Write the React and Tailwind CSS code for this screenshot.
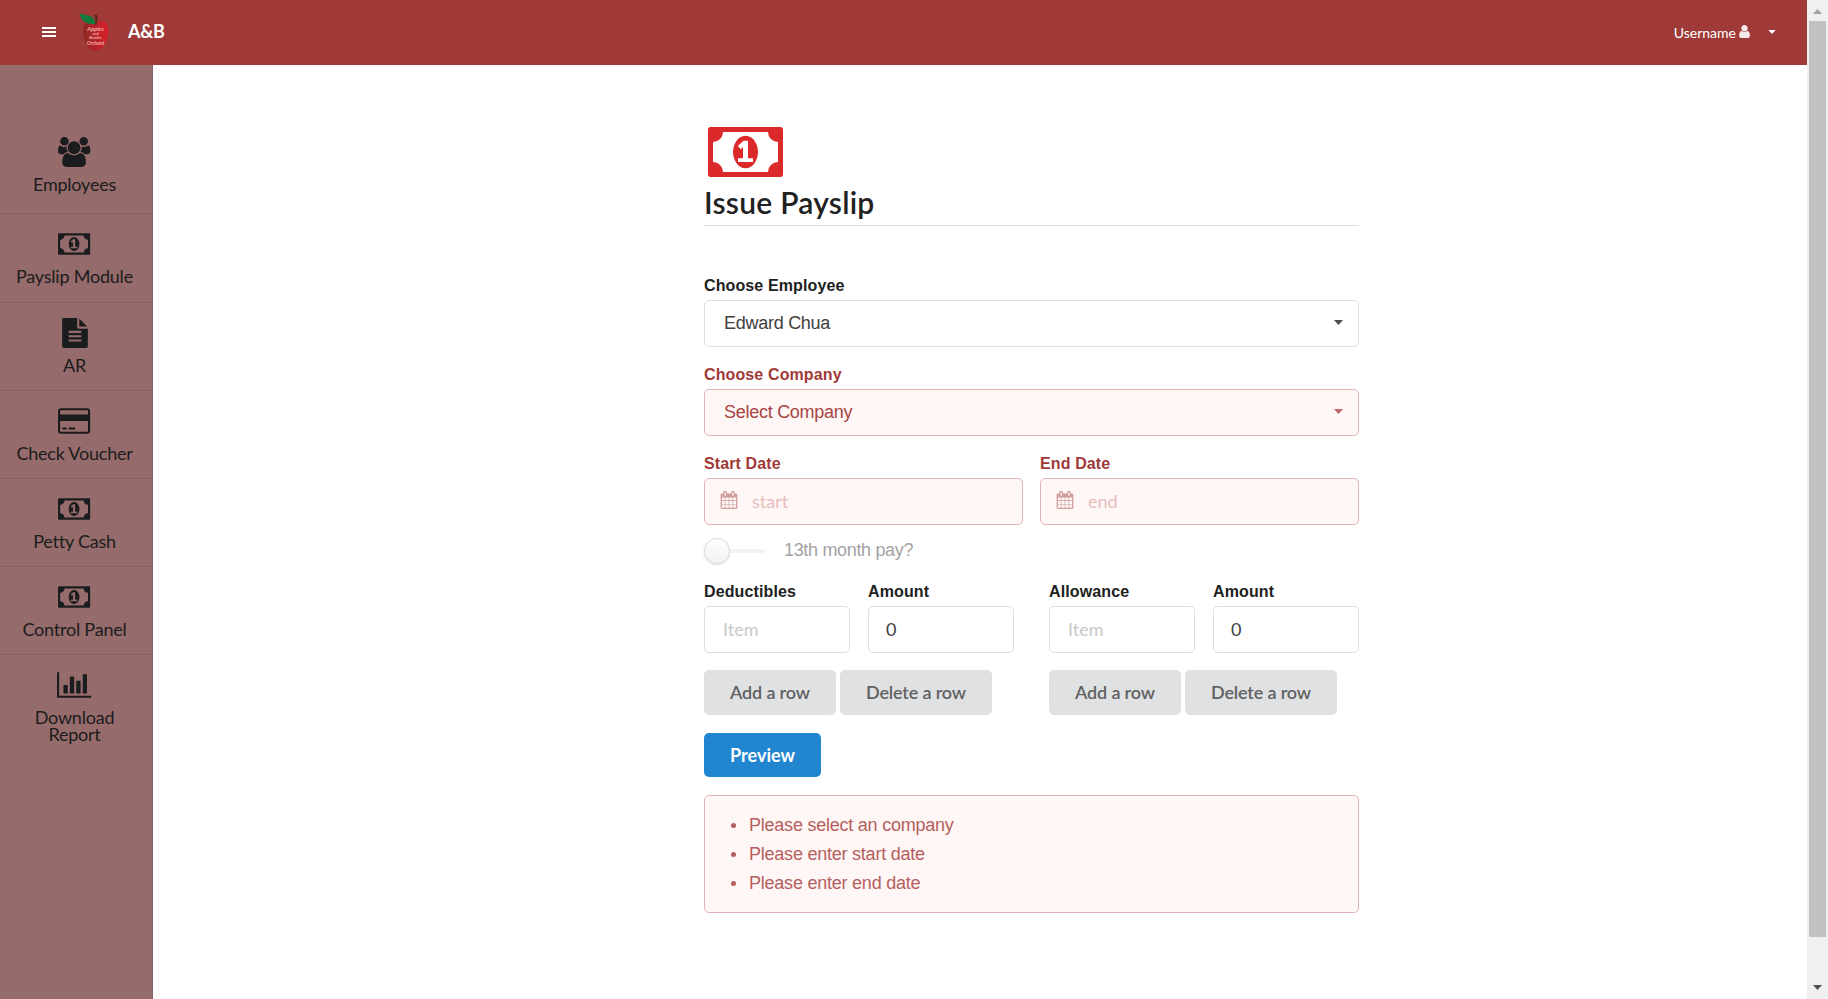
const PATHS = {
  users: "M593 896q-162 5-265 128h-134q-82 0-138-40.5t-56-118.5q0-353 124-353 6 0 43.5 21t97.5 42.5 119 21.5q67 0 133-23-5 37-5 66 0 159 93 256zm1071 637q0 120-73 189.5t-194 69.5h-874q-121 0-194-69.5t-73-189.5q0-53 3.5-103.5t14-109 26.5-108.5 43-97.5 62-81 85.5-53.5 111.5-20q10 0 43 21.5t73 48 107 48 135 21.5 135-21.5 107-48 73-48 43-21.5q61 0 111.5 20t85.5 53.5 62 81 43 97.5 26.5 108.5 14 109 3.5 103.5zm-1024-1277q0 106-75 181t-181 75-181-75-75-181 75-181 181-75 181 75 75 181zm704 384q0 159-112.5 271.5t-271.5 112.5-271.5-112.5-112.5-271.5 112.5-271.5 271.5-112.5 271.5 112.5 112.5 271.5zm576 225q0 78-56 118.5t-138 40.5h-134q-103-123-265-128 93-97 93-256 0-29-5-66 66 23 133 23 59 0 119-21.5t97.5-42.5 43.5-21q124 0 124 353zm-128-609q0 106-75 181t-181 75-181-75-75-181 75-181 181-75 181 75 75 181z",
  money: "M768 1152h384v-96h-128v-448h-114l-148 137 77 80q42-37 55-57h2v288h-128v96zm512-256q0 70-21 142t-59.5 134-101.5 101-138 39-138-39-101.5-101-59.5-134-21-142 21-142 59.5-134 101.5-101 138-39 138 39 101.5 101 59.5 134 21 142zm512 256v-512q-106 0-181-75t-75-181h-1152q0 106-75 181t-181 75v512q106 0 181 75t75 181h1152q0-106 75-181t181-75zm128-832v1152q0 26-19 45t-45 19h-1792q-26 0-45-19t-19-45v-1152q0-26 19-45t45-19h1792q26 0 45 19t19 45z",
  file: "M1596 476q14 14 28 36h-472v-472q22 14 36 28zm-476 164h544v1056q0 40-28 68t-68 28h-1344q-40 0-68-28t-28-68v-1600q0-40 28-68t68-28h800v544q0 40 28 68t68 28zm160 736v-64q0-14-9-23t-23-9h-704q-14 0-23 9t-9 23v64q0 14 9 23t23 9h704q14 0 23-9t9-23zm0-256v-64q0-14-9-23t-23-9h-704q-14 0-23 9t-9 23v64q0 14 9 23t23 9h704q14 0 23-9t9-23zm0-256v-64q0-14-9-23t-23-9h-704q-14 0-23 9t-9 23v64q0 14 9 23t23 9h704q14 0 23-9t9-23z",
  card: "M1760 128q66 0 113 47t47 113v1216q0 66-47 113t-113 47h-1600q-66 0-113-47t-47-113v-1216q0-66 47-113t113-47h1600zm-1600 128q-13 0-22.5 9.5t-9.5 22.5v224h1664v-224q0-13-9.5-22.5t-22.5-9.5h-1600zm1600 1280q13 0 22.5-9.5t9.5-22.5v-608h-1664v608q0 13 9.5 22.5t22.5 9.5h1600zm-1504-128v-128h256v128h-256zm384 0v-128h384v128h-384z",
  chart: "M640 896v512h-256v-512h256zm384-512v1024h-256v-1024h256zm1024 1152v128h-2048v-1536h128v1408h1920zm-640-896v768h-256v-768h256zm384-384v1152h-256v-1152h256z",
  calendar: "M192 1664h288v-288h-288v288zm352 0h320v-288h-320v288zm-352-352h288v-320h-288v320zm352 0h320v-320h-320v320zm-352-384h288v-288h-288v288zm736 736h320v-288h-320v288zm-384-736h320v-288h-320v288zm768 736h288v-288h-288v288zm-384-352h320v-320h-320v320zm-352-864v-288q0-13-9.5-22.5t-22.5-9.5h-64q-13 0-22.5 9.5t-9.5 22.5v288q0 13 9.5 22.5t22.5 9.5h64q13 0 22.5-9.5t9.5-22.5zm736 864h288v-320h-288v320zm-384-384h320v-288h-320v288zm384 0h288v-288h-288v288zm32-480v-288q0-13-9.5-22.5t-22.5-9.5h-64q-13 0-22.5 9.5t-9.5 22.5v288q0 13 9.5 22.5t22.5 9.5h64q13 0 22.5-9.5t9.5-22.5zm384-64v1280q0 52-38 90t-90 38h-1408q-52 0-90-38t-38-90v-1280q0-52 38-90t90-38h128v-96q0-66 47-113t113-47h64q66 0 113 47t47 113v96h384v-96q0-66 47-113t113-47h64q66 0 113 47t47 113v96h128q52 0 90 38t38 90z",
  user: "M1536 1399q0 109-62.5 187t-150.5 78h-854q-88 0-150.5-78t-62.5-187q0-85 8.5-160.5t31.5-152 58.5-131 94-89 134.5-34.5q131 128 313 128t313-128q76 0 134.5 34.5t94 89 58.5 131 31.5 152 8.5 160.5zm-256-887q0 159-112.5 271.5t-271.5 112.5-271.5-112.5-112.5-271.5 112.5-271.5 271.5-112.5 271.5 112.5 112.5 271.5z",
};
const WIDTHS = { users: 1920, money: 1920, card: 1920, chart: 2048 };

function Icon({ name, className }) {
  return (
    <svg viewBox={`0 0 ${WIDTHS[name] || 1792} 1792`} className={className} fill="currentColor">
      <path d={PATHS[name]} />
    </svg>
  );
}

function Caret({ className }) {
  return (
    <svg viewBox="0 0 9 5" className={className} fill="currentColor">
      <path d="M0 0h9L4.5 5z" />
    </svg>
  );
}

function Logo() {
  return (
    <svg viewBox="0 0 32 40" className="ml-[23px] mt-[-1px] h-[40px] w-[32px]">
      <defs>
        <linearGradient id="apple" x1="0" x2="1" y1="0" y2="0">
          <stop offset="0" stopColor="#8c2a20" />
          <stop offset="0.5" stopColor="#b8222a" />
          <stop offset="1" stopColor="#d81f2a" />
        </linearGradient>
      </defs>
      <path d="M17 11.500C14 8.500 7 9 5 13C3 19 5 32 10 36C12 38.500 15 39 17 38.500C20 39 23 37 25 34C29 27 30.500 18 28 12C26 8 19 8 17 11.500Z" fill="url(#apple)" />
      <path d="M15.500 13C17 9 17 5 14.500 3L18 2.500C19 6 18.500 10 17 13Z" fill="#5a2a17" />
      <path d="M0.500 0.500C3 4 12 2 15 7C16 9 16 11 16 12C9 12.500 1.500 10 0.500 0.500Z" fill="#0f7a3c" />
      <g fill="#f3a9a4" fontFamily="Lato, sans-serif" fontWeight="700" textAnchor="middle">
        <text x="16.500" y="18.500" fontSize="5.800" fontStyle="italic">Apples</text>
        <text x="16.500" y="23" fontSize="4">and</text>
        <text x="16.500" y="27" fontSize="4">Bottles</text>
        <text x="16.500" y="32.500" fontSize="5" fontStyle="italic">Orchard</text>
      </g>
    </svg>
  );
}

const MENU = [
  ["users", "Employees", "h-[93px] pt-[16px]"],
  ["money", "Payslip Module", "h-[89px] pt-[15px]"],
  ["file", "AR", "h-[88px] pt-[15px]"],
  ["card", "Check Voucher", "h-[88px] pt-[15px]"],
  ["money", "Petty Cash", "h-[88px] pt-[15px]"],
  ["money", "Control Panel", "h-[88px] pt-[15px]"],
  ["chart", "Download Report", "h-[110px] pt-[15px] border-b-0"],
];

function Label({ children, error }) {
  return (
    <div className={`h-[21px] whitespace-nowrap pt-[1px] font-['Liberation_Sans',sans-serif] text-[16px] leading-[20px] tracking-[0.12px] font-bold ${error ? "text-[#9f3a38]" : "text-[#212121]"}`}>
      {children}
    </div>
  );
}

function Select({ label, value, error }) {
  return (
    <div className="mb-[17px]">
      <Label error={error}>{label}</Label>
      <div className={`mt-[4px] flex h-[47px] items-center justify-between rounded-[5px] border pr-[15px] pl-[19px] font-['Liberation_Sans',sans-serif] text-[18px] tracking-[-0.27px] ${error ? "border-[#e0b4b4] bg-[#fff6f6] text-[#a64543]" : "border-[#dededf] text-[#404040]"}`}>
        <span>{value}</span>
        <Caret className={`mt-[-3px] h-[5px] w-[9px] ${error ? "text-[#b96a69]" : "text-[#4d4d4d]"}`} />
      </div>
    </div>
  );
}

function DateField({ label, placeholder }) {
  return (
    <div>
      <Label error>{label}</Label>
      <div className="mt-[4px] flex h-[47px] items-center rounded-[5px] border border-[#e0b4b4] bg-[#fff6f6] pl-[15px]">
        <Icon name="calendar" className="mt-[-4px] h-[18px] w-[18px] text-[#d09c9b]" />
        <span className="ml-[14px] text-[18px] text-[#e7bdbc]">{placeholder}</span>
      </div>
    </div>
  );
}

function Field({ label, value, placeholder }) {
  return (
    <div>
      <Label>{label}</Label>
      <div className="mt-[4px] flex h-[47px] items-center rounded-[5px] border border-[#dededf] pl-[18px] text-[18px]">
        {placeholder ? <span className="text-[#c8c8c8]">{placeholder}</span> : <span className="ml-[-1px] text-[#404040]">{value}</span>}
      </div>
    </div>
  );
}

function RowGroup({ title }) {
  return (
    <div className="w-[310px]">
      <div className="grid grid-cols-2 gap-[18px]">
        <Field label={title} placeholder="Item" />
        <Field label="Amount" value="0" />
      </div>
      <div className="mt-[17px] flex gap-[4px] text-[18px] font-semibold tracking-[-0.15px] text-[#606162]">
        <button className="h-[45px] w-[132px] rounded-[5px] bg-[#e0e1e2]">Add a row</button>
        <button className="h-[45px] w-[152px] rounded-[5px] bg-[#e0e1e2]">Delete a row</button>
      </div>
    </div>
  );
}

export default function App() {
  return (
    <div className="flex h-[999px] w-[1828px] overflow-hidden bg-white font-['Lato',sans-serif]">
      <div className="flex flex-1 flex-col">
        <header className="flex h-[65px] items-center bg-[#9f3a38] pl-[42px] text-white">
          <svg viewBox="0 0 14 10" className="mt-[-1px] h-[10px] w-[14px]" fill="currentColor">
            <path d="M0 0h14v2H0zM0 4h14v2H0zM0 8h14v2H0z" />
          </svg>
          <Logo />
          <span className="mt-[-3px] ml-[17px] text-[18px] tracking-[-0.3px] font-bold">A&amp;B</span>
          <span className="ml-auto text-[14px]">Username</span>
          <Icon name="user" className="ml-[1px] mt-[-2px] h-[15px] w-[15px] text-[#f5e9e9]" />
          <Caret className="mr-[31px] ml-[16px] mt-[-1px] h-[4px] w-[8px]" />
        </header>
        <div className="flex flex-1">
          <nav className="w-[153px] border-r border-[#8a5f5f] bg-[#966b6b] pt-[56px] text-[#1b1c1d]">
            {MENU.map(([icon, text, cls]) => (
              <div key={text} className={`flex flex-col items-center border-b border-[#8b6161] pr-[12px] pl-[9px] text-center text-[18px] leading-[17px] tracking-[-0.22px] ${cls}`}>
                <Icon name={icon} className="h-[30px] shrink-0" />
                <span className="mt-[9px]">{text}</span>
              </div>
            ))}
          </nav>
          <main className="flex-1 pl-[551px]">
            <div className="w-[655px] pt-[52px]">
              <Icon name="money" className="ml-[4px] h-[70px] w-[75px] text-[#db2828]" />
              <h1 className="h-[39px] border-b border-[#dededf] text-[30px] leading-[31px] font-semibold tracking-[0.25px] text-[#212121]">Issue Payslip</h1>
              <div className="mt-[49px]">
                <Select label="Choose Employee" value="Edward Chua" />
                <Select label="Choose Company" value="Select Company" error />
                <div className="grid grid-cols-2 gap-[17px]">
                  <DateField label="Start Date" placeholder="start" />
                  <DateField label="End Date" placeholder="end" />
                </div>
                <div className="mt-[12px] flex h-[27px] items-center">
                  <div className="h-[26px] w-[26px] rounded-full border border-[#d8d8d8] bg-linear-to-b from-white to-[#f2f2f2] shadow-[0_1px_2px_rgba(34,36,38,0.15)]" />
                  <div className="h-[4px] w-[35px] rounded-r-full bg-[#f2f2f2]" />
                  <span className="mt-[-1px] ml-[19px] font-['Liberation_Sans',sans-serif] text-[18px] tracking-[-0.33px] text-[#a3a3a3]">13th month pay?</span>
                </div>
                <div className="mt-[17px] flex justify-between">
                  <RowGroup title="Deductibles" />
                  <RowGroup title="Allowance" />
                </div>
                <button className="mt-[18px] block h-[44px] w-[117px] rounded-[5px] bg-[#2185d0] text-[18px] font-bold text-white">Preview</button>
                <ul className="mt-[18px] h-[118px] rounded-[5px] border border-[#e0b4b4] bg-[#fff6f6] pt-[15px] pl-[26px] font-['Liberation_Sans',sans-serif] text-[18px] leading-[29px] tracking-[-0.23px] text-[#b45f5d]">
                  {["Please select an company", "Please enter start date", "Please enter end date"].map((t) => (
                    <li key={t} className="flex items-center">
                      <span className="mr-[13px] mt-[-1px] h-[5px] w-[5px] rounded-full bg-current" />
                      {t}
                    </li>
                  ))}
                </ul>
              </div>
            </div>
          </main>
        </div>
      </div>
      <div className="flex w-[21px] flex-col items-center bg-[#f0f0f0]">
        <Caret className="mt-[9px] h-[5px] w-[9px] rotate-180 text-[#a3a3a3]" />
        <div className="mt-[7px] h-[916px] w-[17px] bg-[#c1c1c1]" />
        <Caret className="mt-[48px] h-[5px] w-[9px] text-[#505050]" />
      </div>
    </div>
  );
}
